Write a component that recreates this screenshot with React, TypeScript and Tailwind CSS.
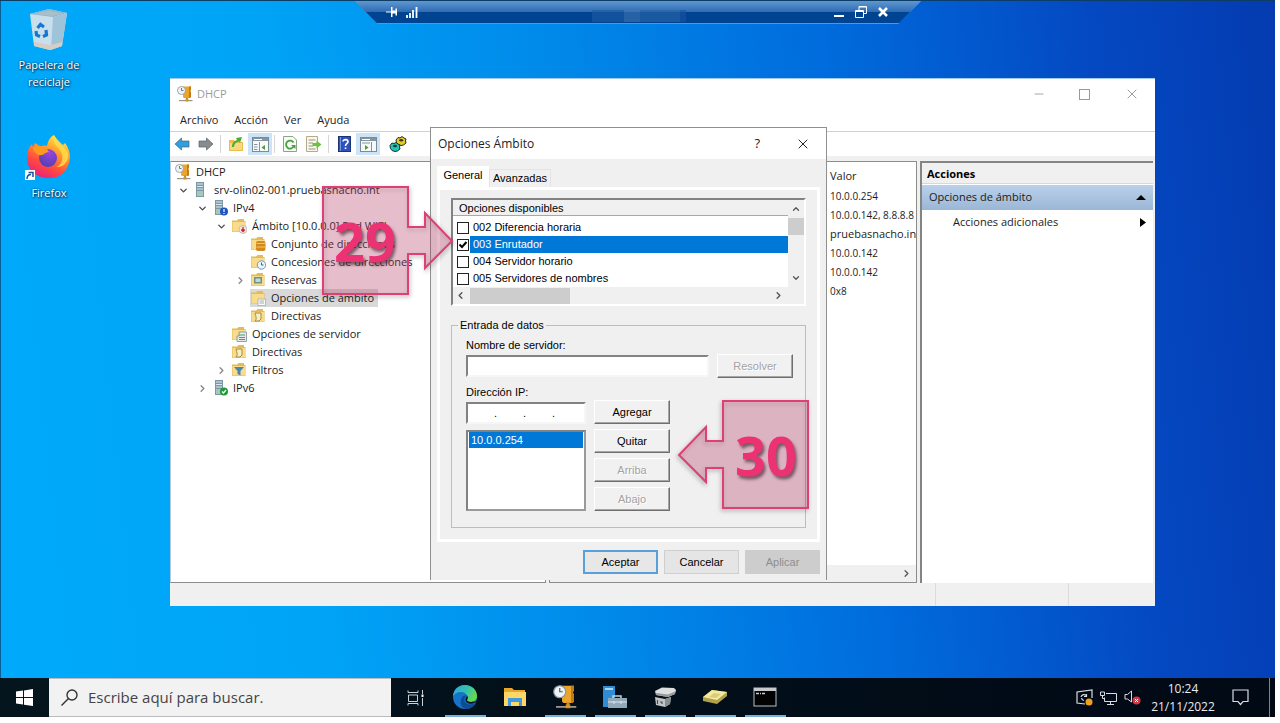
import { useState } from 'react';
import type { ReactNode } from 'react';
import { ChevronDown, ChevronRight, ChevronLeft, ChevronUp, Minus, X } from 'lucide-react';

type IconProps = { className?: string };

// ---------- Desktop icons ----------

const RecycleBinIcon = () => (
  <svg viewBox="0 0 40 44" className="w-10 h-11">
    <path d="M1 6 L20 1 L38 5 L33 38 L21 42 L5 38 Z" fill="#c9dfec" />
    <path d="M1 6 L20 1 L38 5 L24 9 Z" fill="#8fb4c9" />
    <path d="M4 6 L20 2.500 L34 5.500 L23 8 Z" fill="#a9bfca" />
    <path d="M24 9 L38 5 L33 38 L22 42 Z" fill="#9fc3d8" />
    <path d="M5 34 L22 37 L33 34 L33 38 L21 42 L5 38 Z" fill="#d5cdc6" />
    <g fill="none" stroke="#1577cf" strokeWidth="3.2">
      <path d="M8.500 20 L11.500 16.500 L15 19" />
      <path d="M17 22 L17.500 27 L14 28.500" />
      <path d="M7 23 L7.500 27 L11 28.500" />
    </g>
  </svg>
);

const FirefoxIcon = () => (
  <svg viewBox="0 0 44 46" className="w-11 h-[46px]">
    <defs>
      <linearGradient id="ffBody" x1="0.8" y1="0" x2="0.3" y2="1">
        <stop offset="0" stopColor="#fff14f" />
        <stop offset="0.35" stopColor="#ffa02e" />
        <stop offset="0.7" stopColor="#ff4a3f" />
        <stop offset="1" stopColor="#e8207c" />
      </linearGradient>
      <radialGradient id="ffGlobe" cx="0.6" cy="0.2" r="0.9">
        <stop offset="0" stopColor="#9a44e0" />
        <stop offset="1" stopColor="#4a3fae" />
      </radialGradient>
    </defs>
    <path
      d="M27 1 C30 6 33 8 36 11 L38 9 C43 16 44 23 42 29 C39 39 31 45 21 44 C9 44 0 35 0 24 C0 17 2 13 5 10 L6 13 L8 9 L13 12 C16 12 18 11 20 12 C21 7 23 3 27 1 Z"
      fill="url(#ffBody)"
    />
    <circle cx="21" cy="24" r="9" fill="url(#ffGlobe)" />
    <path d="M6 14 C10 10 15 13 20 15 L22 18 C18 18 17 22 12 21 C9 20 7 18 6 14 Z" fill="#ff9a1f" />
    <path d="M27 2 C24 10 33 13 35 20 C37 27 33 32 29 33 C36 34 42 28 41 20 C39 13 31 11 27 2 Z" fill="#ffe04a" opacity="0.8" />
  </svg>
);

// ---------- Console icons ----------

const DhcpIcon = ({ className = 'w-4 h-4' }: IconProps) => (
  <svg viewBox="0 0 16 16" className={className}>
    <path d="M4 0.500 H14 V3.500 L13.200 5 L14 6.500 V11 L13 12 H7 L6 11 V8 Z" fill="#eba52c" />
    <path d="M12 0.500 H14 V3.500 L13.200 5 L14 6.500 V11 L13 12 H12 Z" fill="#c27a17" />
    <path d="M9 11.500 H11 V14 H9 Z" fill="#c98b25" />
    <path d="M2 14 H15.500 V15.200 H2 Z" fill="#9a968b" />
    <path d="M8.500 13 H11.500 V15.500 H8.500 Z" fill="#d89427" />
    <circle cx="4.500" cy="4.500" r="4" fill="#eef3f7" stroke="#8b979f" strokeWidth="0.8" />
    <path d="M4.500 2 V4.500 H6.500" fill="none" stroke="#4b5a66" strokeWidth="0.8" />
  </svg>
);

const ServerIcon = ({ badge }: { badge?: 'info' | 'ok' }) => (
  <svg viewBox="0 0 16 16" className="w-4 h-4">
    <rect x="3" y="0" width="8" height="15" fill="#7b98a6" />
    <path d="M4 2 H10 M4 4.500 H10 M4 7 H10" stroke="#dcebf2" />
    <rect x="4" y="9" width="6" height="5" fill="#a9c7b8" />
    {badge === 'info' && (
      <g>
        <circle cx="12" cy="11.500" r="4" fill="#1c56c4" />
        <path d="M12 9 V12 M12 13 V14" stroke="#fff" strokeWidth="1.2" />
      </g>
    )}
    {badge === 'ok' && (
      <g>
        <circle cx="12" cy="11.500" r="4" fill="#1f9a35" />
        <path d="M10 11.500 L11.500 13 L14 10" fill="none" stroke="#fff" strokeWidth="1.2" />
      </g>
    )}
  </svg>
);

const FolderIcon = ({ children }: { children?: ReactNode }) => (
  <svg viewBox="0 0 16 16" className="w-4 h-4">
    <path d="M1 2.500 H6 L7.500 1 H13 V3 H14.500 V14 H1 Z" fill="#e3bb5a" />
    <path d="M1.500 4 H14 V13.500 H1.500 Z" fill="#f8dc8c" />
    {children}
  </svg>
);

const ScopeIcon = () => (
  <FolderIcon>
    <circle cx="12" cy="11.500" r="4" fill="#f3e9e4" stroke="#a89a92" strokeWidth="0.6" />
    <path d="M12 9 V13 M10.300 11.500 L12 13.500 L13.700 11.500" fill="none" stroke="#c8202a" strokeWidth="1.3" />
  </FolderIcon>
);
const PoolIcon = () => (
  <FolderIcon>
    <rect x="6" y="5" width="9.500" height="10" rx="2" fill="#d38a1c" />
    <path d="M6.500 7.500 H15 M6.500 11 H15" stroke="#f7c765" />
  </FolderIcon>
);
const LeaseIcon = () => (
  <FolderIcon>
    <circle cx="11.500" cy="11" r="4.200" fill="#eaf4fb" stroke="#6e9cba" />
    <path d="M11.500 8.500 V11 H13.500" fill="none" stroke="#35688c" />
  </FolderIcon>
);
const ReserveIcon = () => (
  <FolderIcon>
    <rect x="4" y="5" width="8" height="6.500" fill="#6f9384" />
    <rect x="5.500" y="6.500" width="5" height="3.500" fill="#b9dbe9" />
  </FolderIcon>
);
const OptionsIcon = () => (
  <FolderIcon>
    <path d="M8 9 H15.500 V15.500 H8 Z" fill="#fbfbfb" stroke="#a3a9b0" strokeWidth="0.8" />
    <path d="M9.500 11 H14 M9.500 13 H14" stroke="#8b97a3" strokeWidth="0.8" />
  </FolderIcon>
);
const ServerOptionsIcon = () => (
  <FolderIcon>
    <path d="M8 6 H15.500 V15.500 H6 V10 H8 Z" fill="#e5eaec" stroke="#7d8b90" strokeWidth="0.8" />
    <path d="M8 9 H14 M8 11.500 H14 M8 13.500 H14" stroke="#4ba05c" />
  </FolderIcon>
);
const PolicyIcon = () => (
  <FolderIcon>
    <path d="M5 5 H11 V11 L9 13 H5 C7 11 6 9 5 5 Z" fill="#f5eecb" stroke="#a98a35" />
  </FolderIcon>
);
const FilterIcon = () => (
  <FolderIcon>
    <path d="M3 5 H13 L9.500 9 V13.500 L6.500 12 V9 Z" fill="#4a86ad" />
  </FolderIcon>
);

// ---------- Toolbar icons ----------

const ArrowIcon = ({ flip, className }: { flip?: boolean; className: string }) => (
  <svg viewBox="0 0 16 14" className={`w-4 h-3.5 ${className} ${flip ? 'rotate-180' : ''}`}>
    <path d="M1 7 L7.500 1 V4 H15 V10 H7.500 V13 Z" fill="currentColor" stroke="#4d6471" strokeWidth="0.7" />
  </svg>
);
const UpFolderIcon = () => (
  <svg viewBox="0 0 16 16" className="w-4 h-4">
    <path d="M1 4 H6 L7.500 6 H15 V15 H1 Z" fill="#ebbd4f" />
    <path d="M2 7 H14 V14 H2 Z" fill="#f8d981" />
    <path d="M4 11 C4 7 6 5 9 4 L8 2 L14 1 L12 7 L11 5.500 C8 6 6 8 6 11 Z" fill="#4cae30" />
  </svg>
);
const PaneIcon = ({ right }: { right?: boolean }) => (
  <svg viewBox="0 0 17 15" className="w-[17px] h-[15px]">
    <rect x="0.500" y="0.500" width="16" height="14" fill="#f6f8f9" stroke="#7c8b96" />
    <path d="M1 1 H16 V4 H1 Z" fill="#8595a0" />
    <path d="M2 2.500 H10" stroke="#fff" />
    {right ? (
      <g>
        <path d="M11.500 5 V14 M2 6 H10" stroke="#8595a0" />
        <path d="M5 8 L8.500 10.500 L5 13 Z" fill="#46a02e" />
      </g>
    ) : (
      <g>
        <path d="M7.500 5 V14 M2 7.500 H5.500 M2 10 H5.500 M2 12.500 H5.500" stroke="#8595a0" />
        <path d="M13 8 L9.500 10.500 L13 13 Z" fill="#46a02e" />
      </g>
    )}
  </svg>
);
const RefreshIcon = () => (
  <svg viewBox="0 0 14 16" className="w-3.5 h-4">
    <path d="M0.500 0.500 H10 L13.500 4 V15.500 H0.500 Z" fill="#f7faf5" stroke="#93a08c" />
    <path d="M10.500 6.500 A4 4 0 1 0 10.800 10" fill="none" stroke="#44a43c" strokeWidth="1.8" />
    <path d="M8 9 H12.500 V13 Z" fill="#44a43c" />
  </svg>
);
const ExportIcon = () => (
  <svg viewBox="0 0 16 16" className="w-4 h-4">
    <path d="M0.500 0.500 H11.500 V15.500 H0.500 Z" fill="#fbf8e8" stroke="#b2ab8b" />
    <path d="M2.500 4 H9.500 M2.500 7 H7 M2.500 10 H7 M2.500 13 H9.500" stroke="#8f9787" />
    <path d="M6.500 7 H10.500 V4.500 L15.500 8.500 L10.500 12.500 V10 H6.500 Z" fill="#6cc044" />
  </svg>
);
const HelpIcon = () => (
  <svg viewBox="0 0 13 16" className="w-[13px] h-4">
    <rect x="0.500" y="0.500" width="12" height="15" fill="#2d51bd" stroke="#1d3377" />
    <path d="M2.500 1 V15" stroke="#7694e0" />
    <path d="M5 5.500 C5 3 10 3 10 5.700 C10 7.500 7.500 7.500 7.500 10 M7.500 11.500 V13" fill="none" stroke="#fff" strokeWidth="1.6" />
  </svg>
);
const GearsIcon = () => (
  <svg viewBox="0 0 18 16" className="w-[18px] h-4">
    <path d="M7 4 L9 1.500 L11 2 L13 0.500 L15 2 L17 3 L16.500 5 L17 7 L14.500 9 L12 9.500 L9 8.500 L7.500 6.500 Z" fill="#e3cc2a" stroke="#2b2a18" />
    <ellipse cx="12.200" cy="4.300" rx="2" ry="1.300" fill="#3a3818" />
    <path d="M1 9.500 L3 7 L5 7.500 L7 6.500 L9 8 L11 9 L10.500 11 L11 13 L8.500 15 L6 15.500 L3 14.500 L1.500 12.500 Z" fill="#25c4b6" stroke="#16302f" />
    <ellipse cx="6" cy="10" rx="2" ry="1.300" fill="#123c3a" />
  </svg>
);

// ---------- Taskbar icons ----------

const WindowsIcon = () => (
  <svg viewBox="0 0 17 17" className="w-[17px] h-[17px]">
    <path d="M0 2.500 L7 1.500 V8 H0 Z M8 1.400 L17 0 V8 H8 Z M0 9 H7 V15.500 L0 14.500 Z M8 9 H17 V17 L8 15.700 Z" fill="#fff" />
  </svg>
);
const TaskViewIcon = () => (
  <svg viewBox="0 0 17 16" className="w-[17px] h-4" fill="none" stroke="#c9d1d5">
    <path d="M1 0.500 V2.500 H11 V0.500 M1.500 5 H10.500 V11.500 H1.500 Z M1 15.500 V13.500 H11 V15.500 M15.500 0 V4 M15.500 8 V16" />
    <path d="M14.500 4.500 H16.500 V7 H14.500 Z" fill="#fff" stroke="none" />
  </svg>
);
const EdgeIcon = () => (
  <svg viewBox="0 0 26 26" className="w-[26px] h-[26px]">
    <defs>
      <linearGradient id="edgeTop" x1="0" y1="0" x2="1" y2="0.4">
        <stop offset="0" stopColor="#2aa6dc" />
        <stop offset="0.6" stopColor="#35c1b1" />
        <stop offset="1" stopColor="#66d84e" />
      </linearGradient>
    </defs>
    <circle cx="13" cy="13" r="12" fill="#1673c7" />
    <path d="M1 13 C1 5 7 1 13 1 C20 1 25 6 25 12 C25 16 22 18 18 18 C15 18 14.500 16.500 15.500 15 C16 11 13 8 9.500 8 C5 8 2 10 1 13 Z" fill="url(#edgeTop)" />
    <path d="M16 11 C13 12 11.500 15 13 18 C15 21 19 21 24 19 C22 23 18 25 14 25 C8 24 7 16 11 12 Z" fill="#0f4c94" />
    <path d="M15.500 12 C16.500 13.500 15 15.500 15 16.500 C16 18 19 18.500 24.500 17 C22 20.500 16 20.500 14 17.500 C13 16 13.500 13 15.500 12 Z" fill="#04131c" />
  </svg>
);
const ExplorerIcon = () => (
  <svg viewBox="0 0 22 18" className="w-[22px] h-[18px]">
    <path d="M0 0 H8 L10 2 H21 V17 H0 Z" fill="#e6a72b" />
    <path d="M0 4 H22 V18 H0 Z" fill="#fcd667" />
    <path d="M4 10 H18 V18 H15 V14 H7 V18 H4 Z" fill="#3f9bdc" />
  </svg>
);
const ServerManagerIcon = () => (
  <svg viewBox="0 0 26 24" className="w-[26px] h-6">
    <path d="M1 1 H13 V22 H1 Z" fill="#2d8ed6" />
    <path d="M3 4 H11" stroke="#d7edfb" strokeWidth="1.5" />
    <path d="M6 13 H25 V23 H6 Z" fill="#8fa9b9" />
    <path d="M11 13 V11 H19 V13" fill="none" stroke="#c3d4de" strokeWidth="1.5" />
    <path d="M6 17 H25 M12 16 V19 M19 16 V19" stroke="#dbe6ec" />
  </svg>
);
const ServicesIcon = () => (
  <svg viewBox="0 0 24 22" className="w-6 h-[22px]">
    <path d="M2 5 L9 1.500 L21 2 L23 4 L22 8 L15 11 L3 9 Z" fill="#dddfe0" />
    <path d="M3 7 L15 8.500 L22 5.500 V8 L15 11 L3 9 Z" fill="#97999b" />
    <path d="M2 11 L12 13 L18 11 L17 18 L12 21 L3 19 Z" fill="#c2c5c7" />
    <path d="M12 13 L18 11 L17 18 L12 21 Z" fill="#8a8d8f" />
    <path d="M4.500 14 V18 M7 16 H9 V18" fill="none" stroke="#4b5053" strokeWidth="1.200" />
  </svg>
);
const DriveIcon = () => (
  <svg viewBox="0 0 26 16" className="w-[26px] h-4">
    <path d="M1 8 L10 1 L25 3 L25 7 L15 15 L1 12 Z" fill="#b2a04c" />
    <path d="M1 8 L10 1 L25 3 L15 11 Z" fill="#f2ea9d" />
    <path d="M7 8 L12 4 L19 5 L14 9 Z" fill="#d8cc74" />
  </svg>
);
const ConsoleIcon = () => (
  <svg viewBox="0 0 24 20" className="w-6 h-5">
    <rect x="1" y="1" width="22" height="18" fill="#020202" stroke="#b9bfc3" />
    <path d="M1 1 H23 V4 H1 Z" fill="#c6cacd" />
    <path d="M3 6.500 H6 M7 6.500 H8 M9 6.500 H12" stroke="#c9c9c9" strokeWidth="1.5" />
  </svg>
);

const treeItems = [
  { label: 'srv-olin02-001.pruebasnacho.int', level: 'pl-1', arrow: 'down', icon: <ServerIcon /> },
  { label: 'IPv4', level: 'pl-[23px]', arrow: 'down', icon: <ServerIcon badge="info" /> },
  { label: 'Ámbito [10.0.0.0] Red WIFI', level: 'pl-[42px]', arrow: 'down', icon: <ScopeIcon /> },
  { label: 'Conjunto de direcciones', level: 'pl-[61px]', icon: <PoolIcon /> },
  { label: 'Concesiones de direcciones', level: 'pl-[61px]', icon: <LeaseIcon /> },
  { label: 'Reservas', level: 'pl-[61px]', arrow: 'right', icon: <ReserveIcon /> },
  { label: 'Opciones de ámbito', level: 'pl-[61px]', icon: <OptionsIcon />, selected: true },
  { label: 'Directivas', level: 'pl-[61px]', icon: <PolicyIcon /> },
  { label: 'Opciones de servidor', level: 'pl-[42px]', icon: <ServerOptionsIcon /> },
  { label: 'Directivas', level: 'pl-[42px]', icon: <PolicyIcon /> },
  { label: 'Filtros', level: 'pl-[42px]', arrow: 'right', icon: <FilterIcon /> },
  { label: 'IPv6', level: 'pl-[23px]', arrow: 'right', icon: <ServerIcon badge="ok" /> },
];

const optionValues = [
  { text: '10.0.0.254', numeric: true },
  { text: '10.0.0.142, 8.8.8.8', numeric: true },
  { text: 'pruebasnacho.in' },
  { text: '10.0.0.142', numeric: true },
  { text: '10.0.0.142', numeric: true },
  { text: '0x8', numeric: true },
];

const scopeOptions = ['002 Diferencia horaria', '003 Enrutador', '004 Servidor horario', '005 Servidores de nombres'];

const apps = [
  { name: 'Microsoft Edge', icon: <EdgeIcon />, open: true },
  { name: 'Explorador', icon: <ExplorerIcon />, open: false },
  { name: 'DHCP', icon: <DhcpIcon className="w-6 h-6" />, open: true },
  { name: 'Administrador del servidor', icon: <ServerManagerIcon />, open: true },
  { name: 'Servicios', icon: <ServicesIcon />, open: true },
  { name: 'Discos', icon: <DriveIcon />, open: true },
  { name: 'Consola', icon: <ConsoleIcon />, open: true },
];

const ConnectionBar = () => (
  <div className="absolute top-0 left-1/2 -translate-x-1/2 w-[566px] h-[23px] bg-[#5f93c8] [clip-path:polygon(0_0,100%_0,96%_100%,4%_100%)]">
    <div className="h-[22px] flex items-center pl-[31px] pr-8 text-white bg-linear-to-b from-[#5f97d0] from-0% via-[#2f6db4] via-48% to-[#004391] to-52%">
      <button aria-label="Anclar">
        <svg viewBox="0 0 13 10" className="w-[13px] h-2.5">
          <path d="M0 5 H5" stroke="#fff" />
          <path d="M5 0 H6.500 V3.500 H9.500 V1.500 H11 V8.500 H9.500 V6.500 H6.500 V10 H5 Z" fill="#fff" />
        </svg>
      </button>
      <svg viewBox="0 0 12 12" className="w-3 h-3 ml-[7px]">
        <path d="M1 12 V9 M4 12 V7 M7 12 V4 M10.500 12 V1" stroke="#fff" strokeWidth="1.800" />
      </svg>
      <div className="flex mt-2 ml-[174px] w-[94px] h-3 opacity-60">
        <span className="w-8 bg-[#1f5ca4]" />
        <span className="w-4 bg-[#4478b5]" />
        <span className="w-10 bg-[#2c66ab]" />
        <span className="grow bg-[#1a559d]" />
      </div>
      <button aria-label="Minimizar" className="ml-auto">
        <svg viewBox="0 0 12 12" className="w-3 h-3"><path d="M1 10 H11" stroke="#fff" strokeWidth="2" /></svg>
      </button>
      <button aria-label="Restaurar" className="ml-2.5">
        <svg viewBox="0 0 12 12" className="w-3 h-3" fill="none" stroke="#fff">
          <path d="M4 4 V0.500 H11.500 V7.500 H8.500 M4 1 H11 M0.500 4.500 H8.500 V11.500 H0.500 Z M1 5.500 H8" />
        </svg>
      </button>
      <button aria-label="Cerrar" className="ml-2.5">
        <svg viewBox="0 0 12 12" className="w-3 h-3"><path d="M2 2 L10 10 M10 2 L2 10" stroke="#fff" strokeWidth="2.500" /></svg>
      </button>
    </div>
  </div>
);

const DesktopIcon = ({ label, children }: { label: string; children: ReactNode }) => (
  <a href="#" className="flex flex-col items-center px-3.5 text-center text-white text-[11px] leading-[17px] [text-shadow:1px_1px_2px_#002b50,0_0_2px_#002b50]">
    {children}
    <span className="mt-1">{label}</span>
  </a>
);

const ToolButton = ({ label, active, children }: { label: string; active?: boolean; children: ReactNode }) => (
  <button aria-label={label} className={`flex items-center justify-center w-6 h-[22px] ${active ? 'bg-[#cce4f7]' : ''}`}>
    {children}
  </button>
);

const ToolSeparator = () => <span className="w-px h-[18px] ml-0.5 mr-[3px] bg-[#d5d5d5]" />;

const Tree = () => (
  <div className="w-[376px] bg-white border border-[#8c8c8c] border-l-[#b5cbd9] text-[#1b1b1b] text-[11px] leading-[18px]">
    <div className="flex items-center pl-1 h-[19px]">
      <DhcpIcon />
      <span className="ml-[5px]">DHCP</span>
    </div>
    <ul>
      {treeItems.map((item, index) => (
        <li key={index} className={`flex items-center h-[18px] ${item.level}`}>
          <span className="flex justify-center w-4 text-[#4a4a4a]">
            {item.arrow === 'down' && <ChevronDown size={11} strokeWidth={3} />}
            {item.arrow === 'right' && <ChevronRight size={11} strokeWidth={3} className="text-[#8a8a8a]" />}
          </span>
          <span className={`flex items-center ml-0.5 pr-1 ${item.selected ? 'bg-[#d9d9d9]' : ''}`}>
            {item.icon}
            <span className="ml-[5px] whitespace-nowrap">{item.label}</span>
          </span>
        </li>
      ))}
    </ul>
  </div>
);

const ValuesPane = () => (
  <div className="flex flex-col w-[368px] ml-[3px] bg-white border border-[#8c8c8c] text-[#1b1b1b] text-[11px] overflow-hidden">
    <table className="ml-[280px] border-collapse text-left">
      <thead>
        <tr><th className="h-[25px] pt-[3px] font-normal">Valor</th></tr>
      </thead>
      <tbody>
        {optionValues.map((value, index) => (
          <tr key={index}>
            <td className={`h-[19px] whitespace-nowrap ${value.numeric ? 'text-[10px]' : ''}`}>{value.text}</td>
          </tr>
        ))}
      </tbody>
    </table>
    <div className="flex items-center justify-end mt-auto h-[17px] pr-1 bg-[#f0f0f0] text-[#5a5a5a]">
      <ChevronRight size={11} strokeWidth={3} />
    </div>
  </div>
);

const ActionsPane = () => (
  <div className="grow ml-[3px] mr-0.5 bg-white border-t-2 border-l-2 border-[#848484] text-[11px] text-[#1b1b1b]">
    <h2 className="h-[21px] pl-[5px] bg-[#f0f0f0] border-b border-[#d8d8d8] text-[11px] leading-[22px] font-bold text-black">Acciones</h2>
    <div className="flex items-center justify-between h-[25px] px-[7px] mt-px bg-linear-to-b from-[#b9d0ea] to-[#9bb7d6]">
      <span>Opciones de ámbito</span>
      <svg viewBox="0 0 10 5" className="w-2.5 h-[5px]"><path d="M0 5 L5 0 L10 5 Z" /></svg>
    </div>
    <a href="#" className="flex items-center justify-between h-6 pl-[31px] pr-[7px]">
      <span>Acciones adicionales</span>
      <svg viewBox="0 0 6 9" className="w-1.5 h-[9px]"><path d="M0 0 L6 4.500 L0 9 Z" /></svg>
    </a>
  </div>
);

const RaisedButton = ({ disabled, children }: { disabled?: boolean; children: ReactNode }) => (
  <button
    disabled={disabled}
    className="w-[76px] h-6 border border-t-white border-l-white border-r-[#6f6f6f] border-b-[#6f6f6f] [box-shadow:inset_-1px_-1px_#a6a6a6] bg-[#f1f1f1] text-black disabled:text-[#a3a3a3] disabled:[text-shadow:1px_1px_#fff]"
  >
    {children}
  </button>
);

const OptionsList = ({ selected, onToggle }: { selected: string[]; onToggle: (name: string) => void }) => (
  <div className="h-[108px] border-2 border-t-[#828282] border-l-[#828282] border-r-white border-b-white bg-white">
    <div className="flex h-[87px]">
      <div className="grow">
        <div className="h-4 mb-[3px] pl-1.5 bg-[#f0f0f0] border-b border-[#a8a8a8] leading-4">Opciones disponibles</div>
        {scopeOptions.map((name) => {
          const checked = selected.includes(name);
          return (
            <label key={name} className="flex items-center h-[17px] pl-1">
              <span className="grid w-3 h-3 *:col-start-1 *:row-start-1">
                <input
                  type="checkbox"
                  checked={checked}
                  onChange={() => onToggle(name)}
                  className="appearance-none w-3 h-3 border border-[#222] bg-white"
                />
                {checked && (
                  <svg viewBox="0 0 12 12" className="w-3 h-3 pointer-events-none">
                    <path d="M2.500 5.500 L5 8 L9.500 3" fill="none" stroke="#000" strokeWidth="2" />
                  </svg>
                )}
              </span>
              <span className={`grow ml-px pl-[3px] h-[17px] leading-[17px] ${checked ? 'bg-[#0078d7] text-white' : ''}`}>{name}</span>
            </label>
          );
        })}
      </div>
      <div className="flex flex-col items-center w-4 py-1 bg-[#f0f0f0] text-[#555]">
        <ChevronUp size={10} strokeWidth={3} />
        <span className="w-4 h-[17px] mt-1 bg-[#cdcdcd]" />
        <ChevronDown size={10} strokeWidth={3} className="mt-auto" />
      </div>
    </div>
    <div className="flex items-center h-[17px] pr-4 bg-[#f0f0f0] text-[#555]">
      <ChevronLeft size={11} strokeWidth={3} className="ml-0.5" />
      <span className="w-[100px] h-4 ml-1 bg-[#cdcdcd]" />
      <ChevronRight size={11} strokeWidth={3} className="ml-auto mr-1" />
    </div>
  </div>
);

const ScopeDialog = () => {
  const [selected, setSelected] = useState<string[]>(['003 Enrutador']);

  const toggle = (name: string) =>
    setSelected((prev) => (prev.includes(name) ? prev.filter((n) => n !== name) : [...prev, name]));

  return (
    <div
      role="dialog"
      aria-label="Opciones Ámbito"
      className="absolute left-[260px] top-[48px] w-[397px] h-[453px] border border-b-0 border-[#8f8f8f] bg-[#f0f0f0] font-['Liberation_Sans',Arial,sans-serif] text-[11px] text-black"
    >
      <div className="flex items-center h-[31px] pl-[7px] pr-[15px] bg-white text-xs font-['Open_Sans','Noto_Sans',sans-serif] text-[#222]">
        <span>Opciones Ámbito</span>
        <button className="ml-auto mr-[35px] text-[13px]">?</button>
        <button aria-label="Cerrar"><X size={16} strokeWidth={1.5} /></button>
      </div>

      <div className="px-1.5 pt-[7px]">
        <div className="flex items-end h-[21px]">
          <button className="w-[52px] h-[21px] pb-0.5 bg-white">General</button>
          <button className="w-[62px] h-[18px] pb-0.5 border border-b-0 border-[#e4e4e4]">Avanzadas</button>
        </div>
        <div className="h-[355px] px-[11px] pt-2 border-[3px] border-white">
          <OptionsList selected={selected} onToggle={toggle} />

          <fieldset className="h-[209px] mt-[13px] pl-[14px] border border-[#bdbdbd] leading-[13px]">
            <legend className="-ml-2 px-0.5">Entrada de datos</legend>
            <label htmlFor="serverName" className="block mt-[7px]">Nombre de servidor:</label>
            <div className="flex items-center mt-0.5 gap-2">
              <input
                id="serverName"
                className="w-[243px] h-[22px] px-1 bg-white border-2 border-t-[#828282] border-l-[#828282] border-r-[#f6f6f6] border-b-[#f6f6f6]"
              />
              <RaisedButton disabled>Resolver</RaisedButton>
            </div>
            <div className="flex gap-2 mt-2">
              <div>
                <label htmlFor="ip0" className="block">Dirección IP:</label>
                <div className="flex items-center w-[120px] h-[22px] mt-[3px] bg-white border-2 border-t-[#828282] border-l-[#828282] border-r-[#f6f6f6] border-b-[#f6f6f6]">
                  {[0, 1, 2, 3].map((part) => (
                    <span key={part} className="flex items-center basis-0 grow">
                      <input id={`ip${part}`} aria-label={`Octeto ${part + 1}`} className="w-0 grow" />
                      {part < 3 && <span>.</span>}
                    </span>
                  ))}
                </div>
                <ul className="w-[120px] h-[81px] mt-[6px] border-2 border-[#828282] border-r-[#9a9a9a] border-b-[#9a9a9a] bg-white">
                  <li className="h-4 mx-px pl-0.5 leading-4 bg-[#0078d7] text-white">10.0.0.254</li>
                </ul>
              </div>
              <div className="flex flex-col gap-[5px] pt-[14px]">
                <RaisedButton>Agregar</RaisedButton>
                <RaisedButton>Quitar</RaisedButton>
                <RaisedButton disabled>Arriba</RaisedButton>
                <RaisedButton disabled>Abajo</RaisedButton>
              </div>
            </div>
          </fieldset>
        </div>
      </div>

      <div className="flex justify-end gap-1.5 mt-2 pr-1.5">
        <button className="w-[75px] h-6 border-2 border-[#5a9fd8] bg-[#e7e7e7]">Aceptar</button>
        <button className="w-[75px] h-6 border border-[#cfcfcf] bg-[#e5e5e5]">Cancelar</button>
        <button disabled className="w-[75px] h-6 bg-[#cdcdcd] text-[#8d8d8d]">Aplicar</button>
      </div>
    </div>
  );
};

const DhcpWindow = () => (
  <section className="absolute left-[169px] top-[77px] flex flex-col w-[985px] h-[528px] bg-[#f0f0f0] border-t border-[#9fc9ee]">
    <header className="flex items-center h-[30px] pl-[7px] pr-[15px] bg-white text-[11px] text-[#9a9a9a]">
      <DhcpIcon />
      <h1 className="ml-1">DHCP</h1>
      <button aria-label="Minimizar" className="ml-auto"><Minus size={14} strokeWidth={1.5} /></button>
      <button aria-label="Maximizar" className="ml-[33px]">
        <svg viewBox="0 0 11 11" className="w-[11px] h-[11px]"><rect x="0.500" y="0.500" width="10" height="10" fill="none" stroke="currentColor" /></svg>
      </button>
      <button aria-label="Cerrar" className="ml-[34px]"><X size={16} strokeWidth={1.5} /></button>
    </header>
    <nav className="flex gap-4 h-[23px] pt-px pl-2.5 bg-white border-b border-[#d0d0d0] text-[11px] text-[#222]">
      <button>Archivo</button>
      <button>Acción</button>
      <button>Ver</button>
      <button>Ayuda</button>
    </nav>
    <div className="flex items-center h-[24px] bg-white">
      <ToolButton label="Atrás"><ArrowIcon className="text-[#2f9fe0]" /></ToolButton>
      <ToolButton label="Adelante"><ArrowIcon flip className="text-[#8b8b8b]" /></ToolButton>
      <ToolSeparator />
      <ToolButton label="Subir"><UpFolderIcon /></ToolButton>
      <ToolButton label="Mostrar árbol" active><PaneIcon /></ToolButton>
      <ToolSeparator />
      <ToolButton label="Actualizar"><RefreshIcon /></ToolButton>
      <ToolButton label="Exportar lista"><ExportIcon /></ToolButton>
      <ToolSeparator />
      <ToolButton label="Ayuda"><HelpIcon /></ToolButton>
      <ToolButton label="Panel de acciones" active><PaneIcon right /></ToolButton>
      <span className="w-[6px]" />
      <ToolButton label="Opciones"><GearsIcon /></ToolButton>
    </div>
    <div className="flex grow mt-[5px]">
      <Tree />
      <ValuesPane />
      <ActionsPane />
    </div>
    <footer className="flex justify-end h-[23px]">
      <span className="w-[133px] border-l border-[#dcdcdc]" />
      <span className="w-[87px] border-l border-[#dcdcdc]" />
    </footer>
    <ScopeDialog />
  </section>
);

// Numbered arrows that sit over the windows
const StepMarker = ({ step, left }: { step: string; left?: boolean }) => (
  <div
    className={`absolute flex items-center w-[132px] h-[110px] pointer-events-none ${
      left ? 'left-[676px] top-[399px] justify-end' : 'left-[321px] top-[185px]'
    }`}
  >
    <svg viewBox="0 0 132 110" className={`absolute inset-0 w-full h-full drop-shadow-[1px_2px_2px_rgba(0,0,0,0.3)] ${left ? '-scale-x-100' : ''}`}>
      <path d="M1 1 H86 V41 H103 V27 L130 55 L103 82 V68 H86 V108 H1 Z" fill="#d9487a" fillOpacity="0.28" stroke="#dd3f76" strokeWidth="2" />
    </svg>
    <span className="relative w-[86px] text-center text-[54px] leading-none font-bold text-[#ec3272] font-['Open_Sans','Noto_Sans',sans-serif] [text-shadow:2px_3px_3px_rgba(60,30,40,0.6)]">
      {step}
    </span>
  </div>
);

const Taskbar = () => (
  <footer className="flex h-[39px] bg-linear-to-r from-[#04151e] to-[#010915] text-[#e8ecef]">
    <button aria-label="Inicio" className="flex items-center justify-center w-[49px]"><WindowsIcon /></button>
    <div className="flex items-center w-[342px] pl-3 bg-[#f2f2f2] border-y border-[#b9bdbf]">
      <svg viewBox="0 0 17 17" className="w-[17px] h-[17px]" fill="none" stroke="#333" strokeWidth="1.400">
        <circle cx="11" cy="6" r="5" />
        <path d="M7.500 9.500 L0.500 16.500" />
      </svg>
      <input
        aria-label="Buscar"
        placeholder="Escribe aquí para buscar."
        className="grow ml-2.5 text-[15px] bg-transparent placeholder:text-[#444]"
      />
    </div>
    <button aria-label="Vista de tareas" className="flex items-center justify-center w-[49px]"><TaskViewIcon /></button>
    {apps.map((app) => (
      <button key={app.name} aria-label={app.name} className="flex flex-col items-center w-[50px]">
        <span className="flex items-center grow">{app.icon}</span>
        <span className={`w-[41px] h-0.5 ${app.open ? 'bg-[#7ab0d8]' : ''}`} />
      </button>
    ))}
    <div className="flex items-center ml-auto">
      <svg viewBox="0 0 17 17" className="w-[17px] h-[17px]" fill="none" stroke="#d8dde0" strokeWidth="1.200">
        <path d="M9 15 L1 14 V3 L16 1 V9 M5 8 A3 3 0 0 1 10.500 7 M10.500 5 V7.500 H8 M8 11.500 A3 3 0 0 1 5.500 9" />
        <circle cx="13" cy="13" r="3.500" fill="#f0a01e" stroke="none" />
      </svg>
      <svg viewBox="0 0 17 14" className="w-[17px] h-3.5 ml-[7px]" fill="none" stroke="#d8dde0">
        <path d="M6 2.500 H16.500 V10.500 H4.500 V6.500 M10.500 10.500 V13 M7 13.500 H14 M0.500 1 H4.500 V4.500 H0.500 Z M2.500 5 V7.500 H4.500" />
      </svg>
      <svg viewBox="0 0 17 15" className="w-[17px] h-[15px] ml-[7px]" fill="none" stroke="#d8dde0">
        <path d="M1 4.500 H3.500 L7.500 1 V12 L3.500 9 H1 Z" />
        <circle cx="12.500" cy="10.500" r="4" fill="#dd3340" stroke="none" />
        <path d="M11 9 L14 12 M14 9 L11 12" stroke="#fff" />
      </svg>
      <div className="w-[68px] ml-2 text-center text-xs leading-[18px]">
        <div>10:24</div>
        <div>21/11/2022</div>
      </div>
      <button aria-label="Notificaciones" className="ml-[15px]">
        <svg viewBox="0 0 17 17" className="w-[17px] h-[17px]" fill="none" stroke="#d8dde0" strokeWidth="1.200">
          <path d="M1 1 H16 V12.500 H11 L8.500 15.500 L6 12.500 H1 Z" />
        </svg>
      </button>
      <span className="w-px h-[39px] ml-5 mr-[5px] bg-[#7c858b]" />
    </div>
  </footer>
);

const App = () => {
  return (
    <div className="min-h-screen flex flex-col pr-[5px] pb-1.5 bg-white font-['Open_Sans','Noto_Sans',sans-serif]">
      <div className="grow flex flex-col border-t border-[#0b3d66]">
        <main className="relative grow overflow-hidden border-l border-[#0b5f96] bg-[linear-gradient(84deg,#00aafb_0%,#00a4f7_24%,#0089e9_46%,#006cdd_66%,#0449c2_86%,#043bb0_100%)]">
          <div className="flex flex-col items-center gap-11 w-[96px] pt-[7px]">
            <DesktopIcon label="Papelera de reciclaje"><RecycleBinIcon /></DesktopIcon>
            <div className="relative">
              <DesktopIcon label="Firefox"><FirefoxIcon /></DesktopIcon>
              <span className="absolute left-3 top-9 w-2.5 h-2.5 bg-white">
                <svg viewBox="0 0 10 10" className="w-2.5 h-2.5">
                  <path d="M2 9 C2 6 4 4.500 6 4.500 M3.500 2.500 H8 V7" fill="none" stroke="#1d4f9c" strokeWidth="1.500" />
                </svg>
              </span>
            </div>
          </div>
          <ConnectionBar />
          <DhcpWindow />
          <StepMarker step="29" />
          <StepMarker step="30" left />
        </main>
        <Taskbar />
      </div>
    </div>
  );
};

export default App;
